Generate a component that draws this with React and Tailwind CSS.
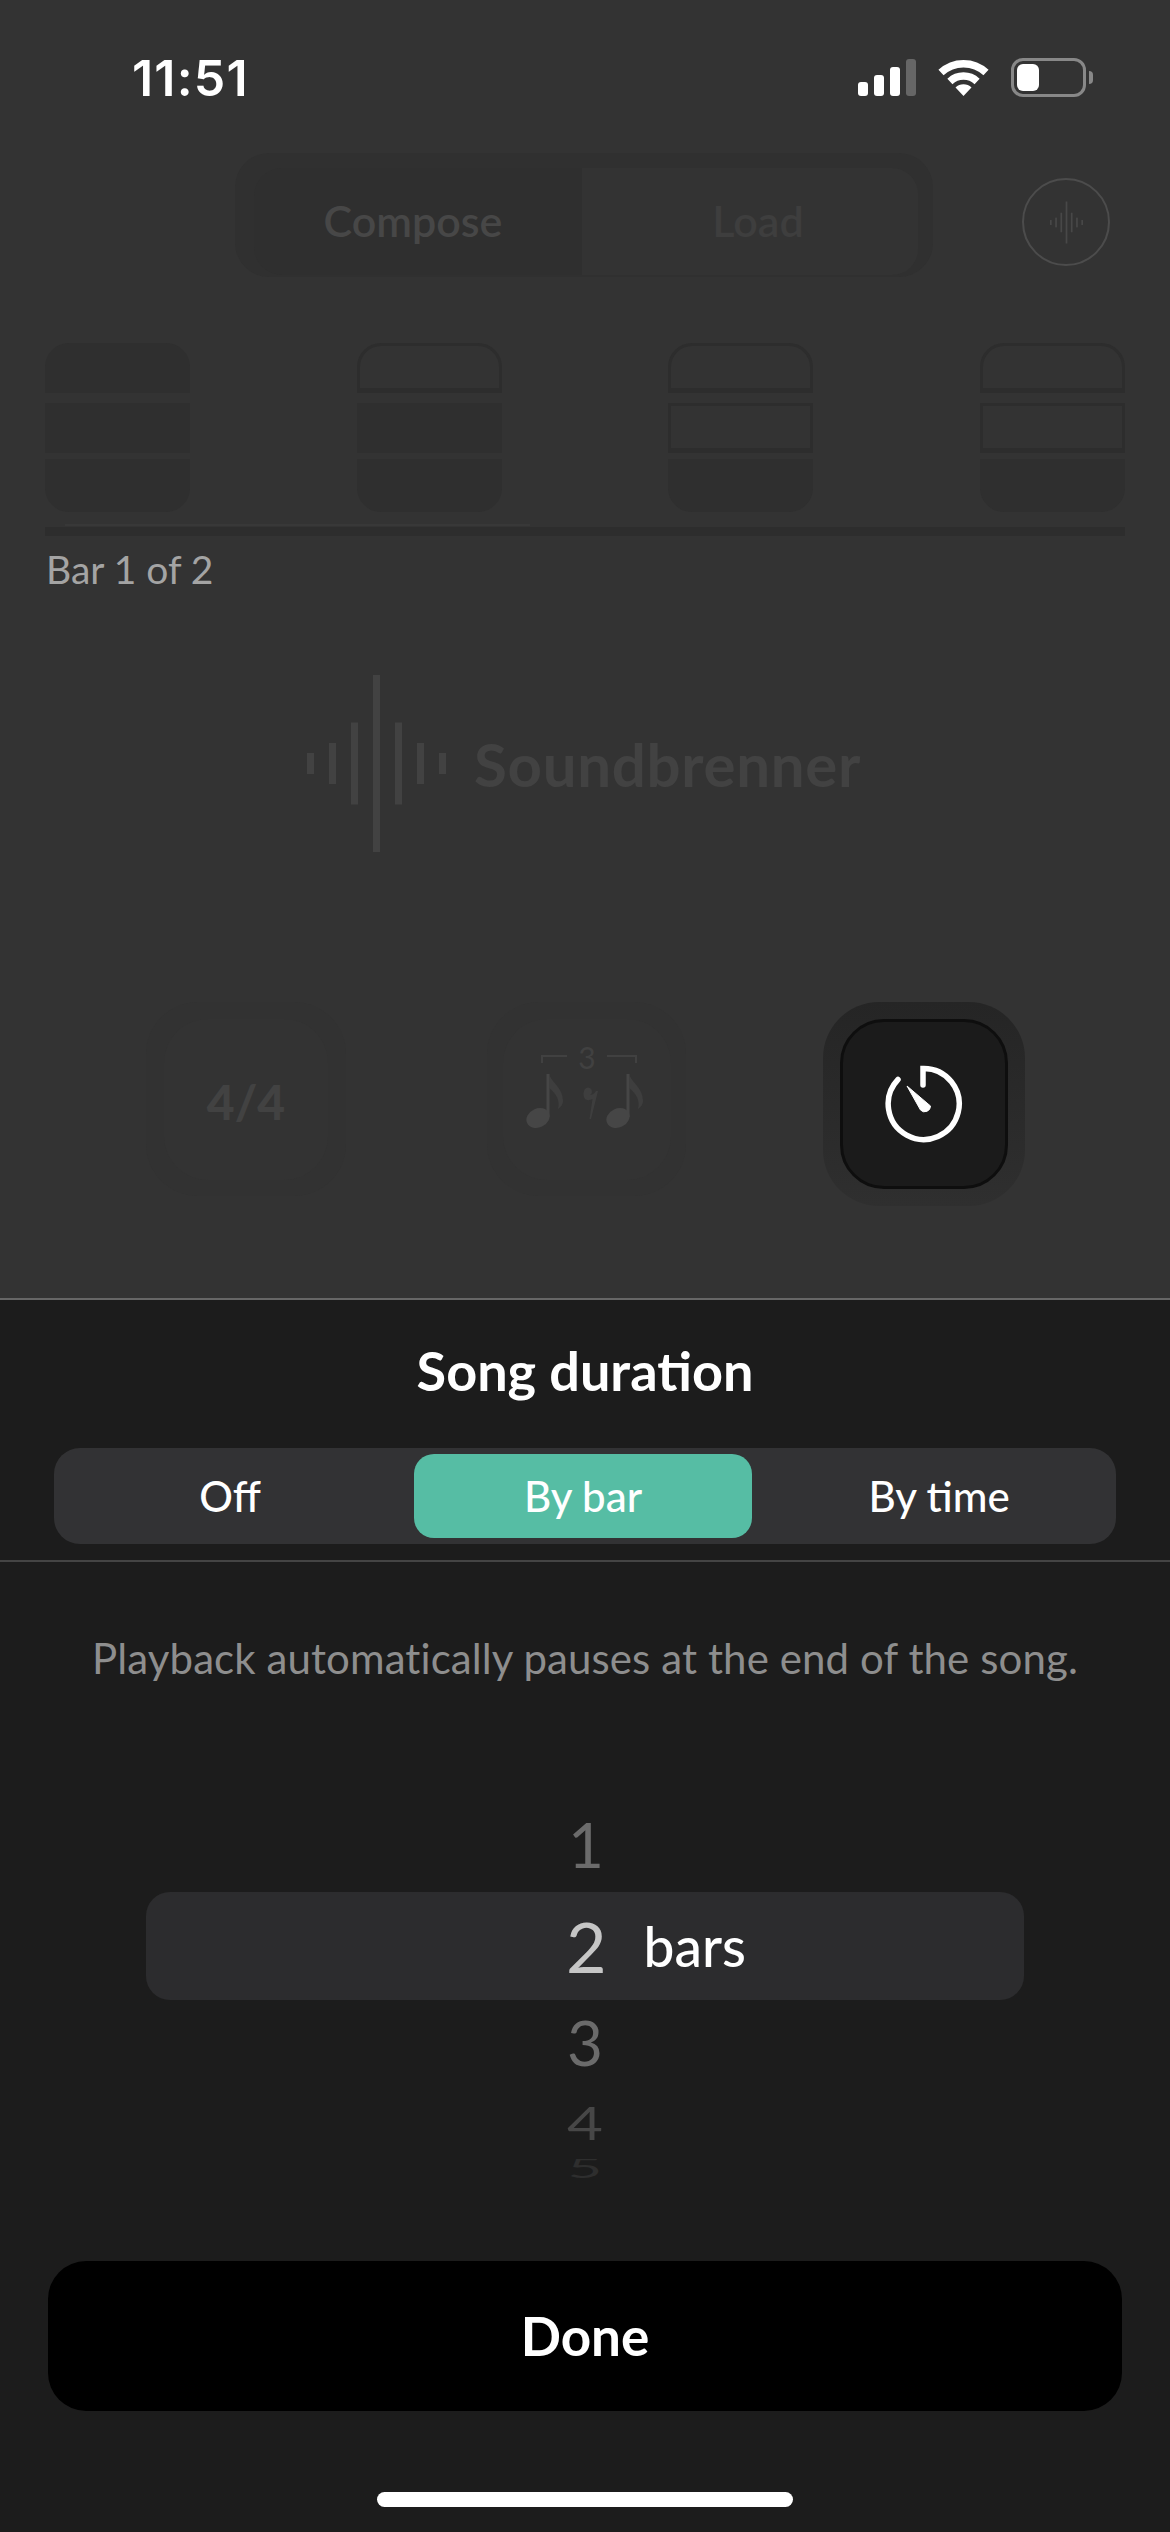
const BAR_ROWS = [
  ['fill', 'fill', 'fill'],
  ['line', 'fill', 'fill'],
  ['line', 'line', 'fill'],
  ['line', 'line', 'fill'],
]

function Waveform({ className }) {
  // bars mirror around the tall centre one
  const bars = [
    { x: 0, h: 21 },
    { x: 22, h: 41 },
    { x: 44, h: 82 },
    { x: 66, h: 177 },
    { x: 88, h: 82 },
    { x: 110, h: 41 },
    { x: 132, h: 21 },
  ]
  return (
    <svg viewBox="0 0 139 177" className={className} fill="currentColor" aria-hidden>
      {bars.map((b) => (
        <rect key={b.x} x={b.x} y={(177 - b.h) / 2} width="7" height={b.h} />
      ))}
    </svg>
  )
}

function StatusIcons() {
  return (
    <div className="flex items-center">
      <svg width="58" height="37" viewBox="0 0 58 37" aria-hidden>
        <rect x="0" y="23" width="10" height="14" rx="3" fill="#fff" />
        <rect x="16" y="16" width="10" height="21" rx="3" fill="#fff" />
        <rect x="32" y="8" width="10" height="29" rx="3" fill="#fff" />
        <rect x="48" y="0" width="10" height="37" rx="3" fill="#666" />
      </svg>
      <svg className="ml-[22px]" width="51" height="37" viewBox="0 0 51 37" fill="none" aria-hidden>
        <path d="M3 13.5A33 33 0 0 1 48 13.5" stroke="#fff" strokeWidth="7.5" />
        <path d="M11.9 22.4A20 20 0 0 1 39.1 22.4" stroke="#fff" strokeWidth="7.5" />
        <path d="M25.5 37L17.5 28.5A11.5 11.5 0 0 1 33.5 28.5Z" fill="#fff" />
      </svg>
      <div className="ml-[22px] w-[75px] h-[39px] rounded-[12px] border-[3px] border-[#888] p-[3px]">
        <div className="w-[22px] h-full rounded-[6px] bg-white" />
      </div>
      <div className="ml-[3px] w-[4px] h-[13px] rounded-r-full bg-[#888]" />
    </div>
  )
}

function TimerIcon() {
  return (
    <svg width="78" height="78" viewBox="0 0 78 78" fill="none" aria-hidden>
      <path d="M13 14.500A35.500 35.500 0 1 0 38 3.500V20" stroke="#fff" strokeWidth="5.500" strokeLinecap="round" />
      <path d="M22 21L35.500 45A5.800 5.800 0 0 0 45.500 41Z" fill="#fff" stroke="#fff" strokeWidth="1" strokeLinejoin="round" />
    </svg>
  )
}

function TripletIcon() {
  return (
    <svg width="122" height="90" viewBox="0 -8 122 90" fill="none" aria-hidden>
      <path d="M16 16V9H41M81 9H110V16" stroke="#414141" strokeWidth="2" />
      <text x="61" y="22" fontSize="30" textAnchor="middle" fill="#414141" fontFamily="Lato, sans-serif">3</text>
      <g fill="#464646">
        <ellipse cx="12" cy="71" rx="12" ry="9.500" transform="rotate(-25 12 71)" />
        <rect x="20.500" y="27" width="3" height="43" />
        <ellipse cx="92" cy="71" rx="12" ry="9.500" transform="rotate(-25 92 71)" />
        <rect x="100.500" y="27" width="3" height="43" />
      </g>
      <g fill="#3e3e3e">
        <path d="M23 27c3 9 14 14 14 27 0 3-2 6-5 8 2-8-1-15-9-21Z" />
        <path d="M103 27c3 9 14 14 14 27 0 3-2 6-5 8 2-8-1-15-9-21Z" />
        <path d="M58 44a4 4 0 1 1 6 4c2 0 4-1 6-4h2L65 72h-1.500l3-20c-3 1.500-6 1.500-7.500 0-1.500-2-2-5-1-8Z" />
      </g>
    </svg>
  )
}

function BackPage() {
  return (
    <div className="h-[1298px] flex flex-col bg-[#333333]">
      <div className="h-[153px] flex items-start pt-[58px] pl-[132px] pr-[77px] justify-between">
        <span className="text-[50px] leading-[40px] font-semibold text-white tracking-[1.2px] font-['Inter',sans-serif]">11:51</span>
        <StatusIcons />
      </div>

      <div className="h-[124px] flex items-start pl-[235px]">
        <div className="w-[698px] h-[124px] rounded-[34px] bg-[#303030] pl-[19px] pr-[15px] pt-[15px] pb-[2px] flex">
          <div className="w-[328px] h-full pr-[10px] rounded-l-[28px] bg-[#2f2f2f] flex items-center justify-center text-[43px] font-semibold text-[#474747]">Compose</div>
          <div className="w-[336px] h-full pl-[16px] rounded-r-[26px] bg-[#333333] flex items-center justify-center text-[43px] font-semibold text-[#3e3e3e]">Load</div>
        </div>
        <div className="ml-[89px] mt-[25px] w-[88px] h-[88px] rounded-full border-2 border-[#4c4c4c] flex items-center justify-center text-[#484848]">
          <Waveform className="w-[33px] h-[43px]" />
        </div>
      </div>

      <div className="mt-[66px] mx-[45px] flex justify-between">
        {BAR_ROWS.map((col, i) => (
          <div key={i} className="w-[145px] flex flex-col">
            {col.map((kind, j) => (
              <div
                key={j}
                className={`${j === 0 ? 'h-[50px] rounded-t-[24px]' : j === 1 ? 'h-[50px] mt-[10px]' : 'h-[53px] mt-[6px] rounded-b-[24px]'} ${kind === 'fill' ? 'bg-[#2f2f2f]' : 'border-[3px] border-b-[5px] border-[#2d2d2d]'}`}
              />
            ))}
          </div>
        ))}
      </div>
      <div className="mt-[12px] ml-[65px] w-[465px] h-[2px] bg-[#383838]" />
      <div className="mt-[1px] ml-[45px] w-[1080px] h-[9px] bg-[#2d2d2d]" />
      <div className="mt-[10px] ml-[46px] text-[39px] leading-[46px] text-[#a4a4a4]">Bar 1 of 2</div>

      <div className="mt-[83px] flex items-center pl-[307px] text-[#424242]">
        <Waveform className="w-[139px] h-[177px]" />
        <span className="ml-[28px] text-[60px] leading-[68px] font-bold text-[#424242] tracking-[0.7px]">Soundbrenner</span>
      </div>

      <div className="mt-[150px] flex items-start pl-[146px]">
        <div className="w-[200px] h-[194px] rounded-[52px] bg-[#323232] flex items-center justify-center">
          <div className="w-[164px] h-[161px] pt-[5px] rounded-[44px] bg-[#333333] flex items-center justify-center text-[48px] font-black text-[#424242]">4/4</div>
        </div>
        <div className="ml-[141px] w-[199px] h-[194px] rounded-[52px] bg-[#323232] flex items-center justify-center">
          <div className="w-[168px] h-[161px] pb-[30px] rounded-[44px] bg-[#333333] flex items-center justify-center">
            <TripletIcon />
          </div>
        </div>
        <div className="ml-[137px] w-[202px] h-[204px] rounded-[56px] bg-gradient-to-b from-[#252525] to-[#2f2f2f] pt-[17px] flex justify-center">
          <div className="w-[168px] h-[170px] rounded-[44px] bg-[#1b1b1b] border-[3px] border-[#0e0e0e] flex items-center justify-center">
            <TimerIcon />
          </div>
        </div>
      </div>
    </div>
  )
}

function Sheet() {
  return (
    <div className="flex-1 flex flex-col bg-[#1c1c1c] border-t-2 border-[#666]">
      <div className="h-[148px] pb-[8px] flex items-center justify-center text-[54px] font-bold text-white">Song duration</div>

      <div className="mx-[54px] h-[96px] rounded-[26px] bg-[#323234] p-[6px] flex items-stretch">
        <div className="w-[354px] pr-[14px] flex items-center justify-center text-[42px] font-medium text-white">Off</div>
        <div className="w-[338px] rounded-[20px] bg-[#56bda4] flex items-center justify-center text-[42px] font-medium text-white">By bar</div>
        <div className="flex-1 pl-[16px] flex items-center justify-center text-[42px] font-medium text-white">By time</div>
      </div>
      <div className="mt-[16px] h-[2px] bg-[#444]" />

      <div className="h-[241px] pt-[72px] text-center text-[42px] leading-[48px] tracking-[0.1px] text-[#8e8e8e]">
        Playback automatically pauses at the end of the song.
      </div>

      <div className="h-[89px] pb-[8px] flex items-center justify-center text-[62px] leading-none text-[#6b6b6b] pl-[2px]">1</div>
      <div className="mx-[146px] h-[108px] rounded-[24px] bg-[#2c2c2e] pl-[420px] flex items-center">
        <span className="text-[70px] leading-none text-[#c6c6c6]">2</span>
        <span className="ml-[37px] text-[55px] leading-none font-medium text-white">bars</span>
      </div>
      <div className="h-[84px] flex items-center justify-center text-[62px] leading-none text-[#6b6b6b]">3</div>
      <div className="h-[75px] flex items-center justify-center text-[62px] leading-none text-[#474747] scale-y-[0.75]">4</div>
      <div className="h-[20px] overflow-hidden flex justify-center">
        <span className="text-[60px] leading-[40px] text-[#2e2e2e] scale-y-[0.45] origin-top">5</span>
      </div>

      <div className="mt-[82px] mx-[48px] h-[150px] rounded-[38px] bg-black flex items-center justify-center text-[53px] font-bold text-white">Done</div>
      <div className="mt-[81px] mx-auto w-[416px] h-[15px] rounded-full bg-white" />
    </div>
  )
}

export default function App() {
  return (
    <div className="w-[1170px] h-[2532px] flex flex-col overflow-hidden font-['Lato',sans-serif]">
      <BackPage />
      <Sheet />
    </div>
  )
}
